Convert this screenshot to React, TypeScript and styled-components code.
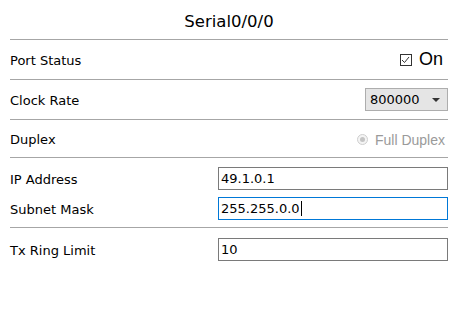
import styled, { createGlobalStyle } from "styled-components";

const GlobalStyle = createGlobalStyle`
  html, body {
    margin: 0;
    padding: 0;
    background: #ffffff;
  }
  body {
    font-family: "DejaVu Sans", Verdana, sans-serif;
    color: #000;
  }
`;

const Panel = styled.div`
  width: 460px;
  height: 314px;
  box-sizing: border-box;
  padding: 0 12px 0 10px;
`;

const Title = styled.div`
  height: 40px;
  box-sizing: border-box;
  padding-top: 12px;
  border-bottom: 1px solid #a6a6a6;
  text-align: center;
  font-size: 16.5px;
  line-height: 20px;
`;

const Row = styled.div<{ h: number; divider?: boolean }>`
  height: ${(p) => p.h}px;
  box-sizing: border-box;
  display: flex;
  align-items: center;
  justify-content: space-between;
  border-bottom: ${(p) => (p.divider === false ? "none" : "1px solid #a6a6a6")};
`;

const Group = styled.div`
  display: flex;
  flex-direction: column;
  gap: 7px;
  padding: 9px 0 7px;
  border-bottom: 1px solid #a6a6a6;
`;

const FieldRow = styled.div`
  display: flex;
  align-items: center;
  justify-content: space-between;
`;

const Label = styled.span`
  font-size: 13px;
  padding-top: 2px;
`;

const Toggle = styled.label`
  display: flex;
  align-items: center;
  gap: 7px;
  font-family: "Liberation Sans", Arial, sans-serif;
  font-size: 18px;
  padding-right: 5px;
`;

const Check = styled.span`
  width: 10px;
  height: 10px;
  border: 1px solid #333;
  display: flex;
  align-items: center;
  justify-content: center;
`;

const Select = styled.div`
  width: 83px;
  height: 23px;
  box-sizing: border-box;
  border: 1px solid #adadad;
  background: #e5e5e5;
  display: flex;
  align-items: center;
  justify-content: space-between;
  padding: 0 7px 0 4px;
  font-size: 13px;
`;

const Radio = styled.div`
  display: flex;
  align-items: center;
  gap: 7px;
  font-family: "Liberation Sans", Arial, sans-serif;
  font-size: 14px;
  color: #9a9a9a;
  padding-right: 3px;
  margin-top: 2px;
`;

const RadioDot = styled.span`
  width: 11px;
  height: 11px;
  box-sizing: border-box;
  border-radius: 50%;
  border: 1px solid #cfcfcf;
  background: #f4f4f4;
  display: flex;
  align-items: center;
  justify-content: center;
  &::after {
    content: "";
    width: 5px;
    height: 5px;
    border-radius: 50%;
    background: #c4c4c4;
  }
`;

const Input = styled.div<{ focused?: boolean }>`
  width: 230px;
  height: 23px;
  box-sizing: border-box;
  border: 1px solid ${(p) => (p.focused ? "#0078d7" : "#7a7a7a")};
  display: flex;
  align-items: center;
  padding-left: 2px;
  font-size: 13px;
`;

const Caret = styled.span`
  display: inline-block;
  width: 1px;
  height: 15px;
  background: #000;
  margin-left: 1px;
`;

export default function App() {
  return (
    <>
      <GlobalStyle />
      <Panel>
        <Title>Serial0/0/0</Title>
        <Row h={40}>
          <Label>Port Status</Label>
          <Toggle>
            <Check>
              <svg width="9" height="8" viewBox="0 0 9 8">
                <path d="M1 4 L3.5 6.5 L8 1" fill="none" stroke="#333" strokeWidth="1" />
              </svg>
            </Check>
            On
          </Toggle>
        </Row>
        <Row h={40}>
          <Label>Clock Rate</Label>
          <Select>
            800000
            <svg width="8" height="4" viewBox="0 0 8 4">
              <path d="M0 0 H8 L4 4 Z" fill="#333" />
            </svg>
          </Select>
        </Row>
        <Row h={38}>
          <Label>Duplex</Label>
          <Radio>
            <RadioDot />
            Full Duplex
          </Radio>
        </Row>
        <Group>
          <FieldRow>
            <Label>IP Address</Label>
            <Input>49.1.0.1</Input>
          </FieldRow>
          <FieldRow>
            <Label>Subnet Mask</Label>
            <Input focused>
              255.255.0.0
              <Caret />
            </Input>
          </FieldRow>
        </Group>
        <Row h={42} divider={false}>
          <Label>Tx Ring Limit</Label>
          <Input>10</Input>
        </Row>
      </Panel>
    </>
  );
}
